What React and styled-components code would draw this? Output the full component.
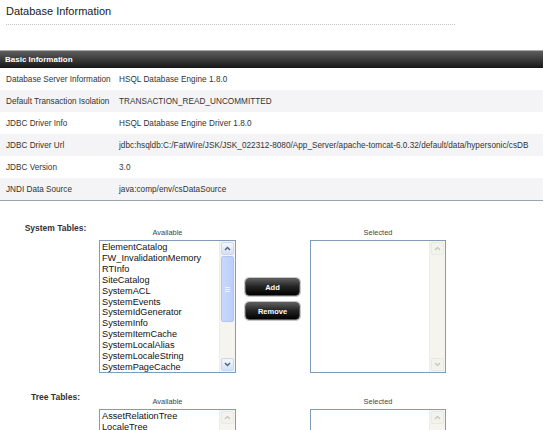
import React from "react";
import styled, { createGlobalStyle } from "styled-components";

const GlobalStyle = createGlobalStyle`
  html, body {
    margin: 0;
    padding: 0;
    background: #fff;
    overflow: hidden;
  }
  body {
    font-family: "Liberation Sans", Arial, sans-serif;
    color: #333;
  }
`;

const Page = styled.div`
  width: 555px;
  padding-top: 4px;
`;

const Title = styled.h1`
  margin: 0 0 0 6px;
  font-size: 11px;
  font-weight: normal;
  line-height: 14px;
  color: #1a1a1a;
`;

const Rule = styled.div`
  margin: 6px 0 0 6px;
  width: 449px;
  border-top: 1px dotted #c4c4c4;
`;

const InfoTable = styled.div`
  margin-top: 25px;
  width: 543px;
  border-bottom: 1px solid #9ca3ab;
`;

const TableHeader = styled.div`
  box-sizing: border-box;
  height: 18px;
  padding-left: 5px;
  border-top: 1px solid #a8a8a8;
  background: linear-gradient(#5e5e5e, #3a3a3a 50%, #161616);
  color: #fff;
  font-size: 8px;
  font-weight: bold;
  line-height: 17px;
`;

const Row = styled.div`
  display: grid;
  grid-template-columns: 119px 1fr;
  align-items: center;
  height: 22px;
  background: ${(p) => (p.$shaded ? "#f4f4f6" : "#fff")};
  font-size: 8.2px;
  color: #333;
`;

const RowLabel = styled.span`
  padding-left: 6px;
  white-space: nowrap;
`;

const RowValue = styled.span`
  white-space: nowrap;
  letter-spacing: 0.03px;
`;

const Section = styled.div`
  display: flex;
  align-items: flex-start;
  margin-top: ${(p) => p.$top}px;
`;

const SectionLabel = styled.div`
  width: 87px;
  padding-left: 12px;
  text-align: center;
  font-size: 8.5px;
  font-weight: bold;
  line-height: 11px;
  color: #333;
`;

const ListColumn = styled.div`
  width: ${(p) => p.$width}px;
  margin-left: ${(p) => p.$gap || 0}px;
  padding-top: 5px;
`;

const Caption = styled.div`
  text-align: center;
  font-size: 7.4px;
  line-height: 10px;
  margin-bottom: 2px;
  color: #444;
`;

const ListBox = styled.div`
  box-sizing: border-box;
  display: flex;
  height: 133px;
  border: 1px solid #7f9db9;
  background: #fff;
`;

const Items = styled.div`
  flex: 1;
  overflow: hidden;
  padding: 1px 2px;
  font-size: 9.2px;
  line-height: 10.9px;
  color: #111;
  white-space: nowrap;
`;

const Scrollbar = styled.div`
  width: 15px;
  display: flex;
  flex-direction: column;
  background: #f5f4ef;
  border-left: 1px solid #eeede6;
`;

const Arrow = styled.div`
  box-sizing: border-box;
  height: 13px;
  margin: 1px;
  display: flex;
  align-items: center;
  justify-content: center;
  border-radius: 2px;
  border: 1px solid ${(p) => (p.$off ? "#e9e8e1" : "#c9d7f7")};
  background: ${(p) =>
    p.$off ? "#f3f3ee" : "linear-gradient(#f4f7fe, #d3dffb)"};
`;

const Track = styled.div`
  flex: 1;
  padding: 0 1px;
`;

const Thumb = styled.div`
  box-sizing: border-box;
  height: 66px;
  display: flex;
  flex-direction: column;
  align-items: center;
  justify-content: center;
  gap: 1px;
  border-radius: 2px;
  border: 1px solid #b2c5f2;
  background: linear-gradient(90deg, #c9d8fc, #bccffa);
`;

const Grip = styled.span`
  width: 5px;
  height: 1px;
  background: #eef3ff;
`;

const ButtonColumn = styled.div`
  display: flex;
  flex-direction: column;
  gap: 6px;
  margin-left: 9px;
  padding-top: 55px;
`;

const ActionButton = styled.button`
  box-sizing: border-box;
  width: 55px;
  height: 18px;
  padding: 0;
  border: 1px solid #5a5a5a;
  border-radius: 4px;
  background: linear-gradient(#5b5b5b, #262626 45%, #000);
  box-shadow: 0 0 0 1px #c8c8c8;
  color: #fff;
  font-family: "Liberation Sans", Arial, sans-serif;
  font-size: 7.5px;
  font-weight: bold;
  cursor: pointer;
`;

const Chevron = ({ up, off }) => (
  <svg width="7" height="5" viewBox="0 0 7 5">
    <polyline
      points={up ? "1,4 3.5,1.5 6,4" : "1,1 3.5,3.5 6,1"}
      fill="none"
      stroke={off ? "#c8c8c0" : "#4d6185"}
      strokeWidth="1.4"
    />
  </svg>
);

const List = ({ items, off }) => (
  <ListBox>
    <Items>
      {items.map((item) => (
        <div key={item}>{item}</div>
      ))}
    </Items>
    <Scrollbar>
      <Arrow $off={off}>
        <Chevron up off={off} />
      </Arrow>
      <Track>
        {!off && (
          <Thumb>
            <Grip />
            <Grip />
            <Grip />
          </Thumb>
        )}
      </Track>
      <Arrow $off={off}>
        <Chevron off={off} />
      </Arrow>
    </Scrollbar>
  </ListBox>
);

const info = [
  ["Database Server Information", "HSQL Database Engine 1.8.0"],
  ["Default Transaction Isolation", "TRANSACTION_READ_UNCOMMITTED"],
  ["JDBC Driver Info", "HSQL Database Engine Driver 1.8.0"],
  [
    "JDBC Driver Url",
    "jdbc:hsqldb:C:/FatWire/JSK/JSK_022312-8080/App_Server/apache-tomcat-6.0.32/default/data/hypersonic/csDB",
  ],
  ["JDBC Version", "3.0"],
  ["JNDI Data Source", "java:comp/env/csDataSource"],
];

const systemTables = [
  "ElementCatalog",
  "FW_InvalidationMemory",
  "RTInfo",
  "SiteCatalog",
  "SystemACL",
  "SystemEvents",
  "SystemIdGenerator",
  "SystemInfo",
  "SystemItemCache",
  "SystemLocalAlias",
  "SystemLocaleString",
  "SystemPageCache",
];

const treeTables = ["AssetRelationTree", "LocaleTree"];

const TableChooser = ({ label, items, top, scrollable }) => (
  <Section $top={top}>
    <SectionLabel>{label}</SectionLabel>
    <ListColumn $width={137}>
      <Caption>Available</Caption>
      <List items={items} off={!scrollable} />
    </ListColumn>
    <ButtonColumn>
      <ActionButton>Add</ActionButton>
      <ActionButton>Remove</ActionButton>
    </ButtonColumn>
    <ListColumn $width={136} $gap={10}>
      <Caption>Selected</Caption>
      <List items={[]} off />
    </ListColumn>
  </Section>
);

export default function App() {
  return (
    <Page>
      <GlobalStyle />
      <Title>Database Information</Title>
      <Rule />
      <InfoTable>
        <TableHeader>Basic Information</TableHeader>
        {info.map(([label, value], i) => (
          <Row key={label} $shaded={i % 2 === 1}>
            <RowLabel>{label}</RowLabel>
            <RowValue>{value}</RowValue>
          </Row>
        ))}
      </InfoTable>
      <TableChooser
        label="System Tables:"
        items={systemTables}
        top={22}
        scrollable
      />
      <TableChooser label="Tree Tables:" items={treeTables} top={19} />
    </Page>
  );
}
